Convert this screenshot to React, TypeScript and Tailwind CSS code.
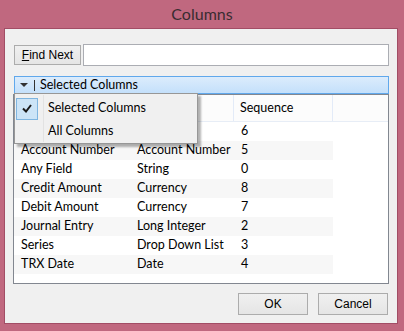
import React from 'react';

// first row's name/type sit under the open menu in the screenshot
const rows = [
  { name: '', type: '', seq: '6' },
  { name: 'Account Number', type: 'Account Number', seq: '5' },
  { name: 'Any Field', type: 'String', seq: '0' },
  { name: 'Credit Amount', type: 'Currency', seq: '8' },
  { name: 'Debit Amount', type: 'Currency', seq: '7' },
  { name: 'Journal Entry', type: 'Long Integer', seq: '2' },
  { name: 'Series', type: 'Drop Down List', seq: '3' },
  { name: 'TRX Date', type: 'Date', seq: '4' },
];

const ui = "font-['Lato','Noto_Sans',sans-serif]";
const btn = "font-['Liberation_Sans',Arial,sans-serif] text-[12px] text-black border border-[#acacac] bg-gradient-to-b from-[#f0f0f0] to-[#e5e5e5] flex items-center justify-center";

export default function App() {
  return (
    <div className={`w-[404px] h-[331px] bg-[#c0687f] flex flex-col ${ui}`}>
      {/* Title bar */}
      <div className="h-[28px] shrink-0 flex items-center justify-center text-[16px] text-[#3a2c31]">
        Columns
      </div>

      {/* Client area */}
      <div className="mx-[4px] mr-[6px] h-[296px] bg-[#f0f0f0] border border-[#a24d65] flex flex-col text-[12.5px]">
        <div className="flex items-center gap-[2px] pl-[9px] pr-[8px] mt-[15px] h-[22px]">
          <button className={`${btn} w-[67px] h-[20px]`}>
            <span><span className="underline">F</span>ind Next</span>
          </button>
          <div className="flex-1 h-[22px] bg-white border border-[#abadb3]" />
        </div>

        <div className="relative mt-[10px] ml-[8px] mr-[8px]">
          {/* Drop-down bar */}
          <div className="h-[18px] ml-[1px] bg-gradient-to-b from-[#dcecfc] to-[#c4e0fb] border border-[#60a8ec] flex items-center text-black">
            <svg width="10" height="6" viewBox="0 0 10 6" className="ml-[4px]">
              <path d="M1 1 H9 L5 5 Z" fill="#333" />
            </svg>
            <div className="w-px h-[11px] bg-[#333] ml-[5px]" />
            <span className="ml-[5px] leading-none">Selected Columns</span>
          </div>

          {/* List */}
          <div className="h-[190px] bg-white border border-[#828790] text-black">
            <div className="h-[27px] flex bg-[#fcfcfc] border-b border-[#e7edf6]">
              <div className="w-[220px] border-r border-[#e3ebf8]" />
              <div className="w-[99px] pl-[6px] flex items-center border-r border-[#e3ebf8]">Sequence</div>
            </div>
            {rows.map((r, i) => (
              <div key={r.seq} className={`h-[19px] w-[319px] flex items-center ${i % 2 === 1 ? 'bg-[#f7f7f7]' : 'bg-white'}`}>
                <div className="w-[120px] pl-[7px] whitespace-nowrap">{r.name}</div>
                <div className="w-[104px] pl-[3px] whitespace-nowrap">{r.type}</div>
                <div className="pl-[3px]">{r.seq}</div>
              </div>
            ))}
          </div>

          {/* Menu overlay */}
          <div className="absolute left-[1px] top-[17px] w-[184px] pt-[2px] pb-[2px] bg-[#f0f0f0] border border-[#979797] shadow-[3px_3px_2px_rgba(0,0,0,0.3)] text-black">
            <div className="absolute left-[28px] top-[1px] bottom-[1px] w-px bg-[#e2e2e2]" />
            <div className="h-[25px] flex items-center">
              <div className="ml-[1px] w-[22px] h-[22px] bg-[#cce4f7] border border-[#7fb5e0] flex items-center justify-center">
                <svg width="10" height="9" viewBox="0 0 10 9">
                  <path d="M1 4.5 L4 7.5 L9 1" stroke="#1a1a1a" strokeWidth="2" fill="none" />
                </svg>
              </div>
              <span className="ml-[10px]">Selected Columns</span>
            </div>
            <div className="h-[20px] flex items-center">
              <span className="ml-[33px]">All Columns</span>
            </div>
          </div>
        </div>

        <div className="flex justify-end gap-[10px] mr-[9px] mt-[9px]">
          <button className={`${btn} w-[70px] h-[22px]`}>OK</button>
          <button className={`${btn} w-[70px] h-[22px]`}>Cancel</button>
        </div>
      </div>
    </div>
  );
}
